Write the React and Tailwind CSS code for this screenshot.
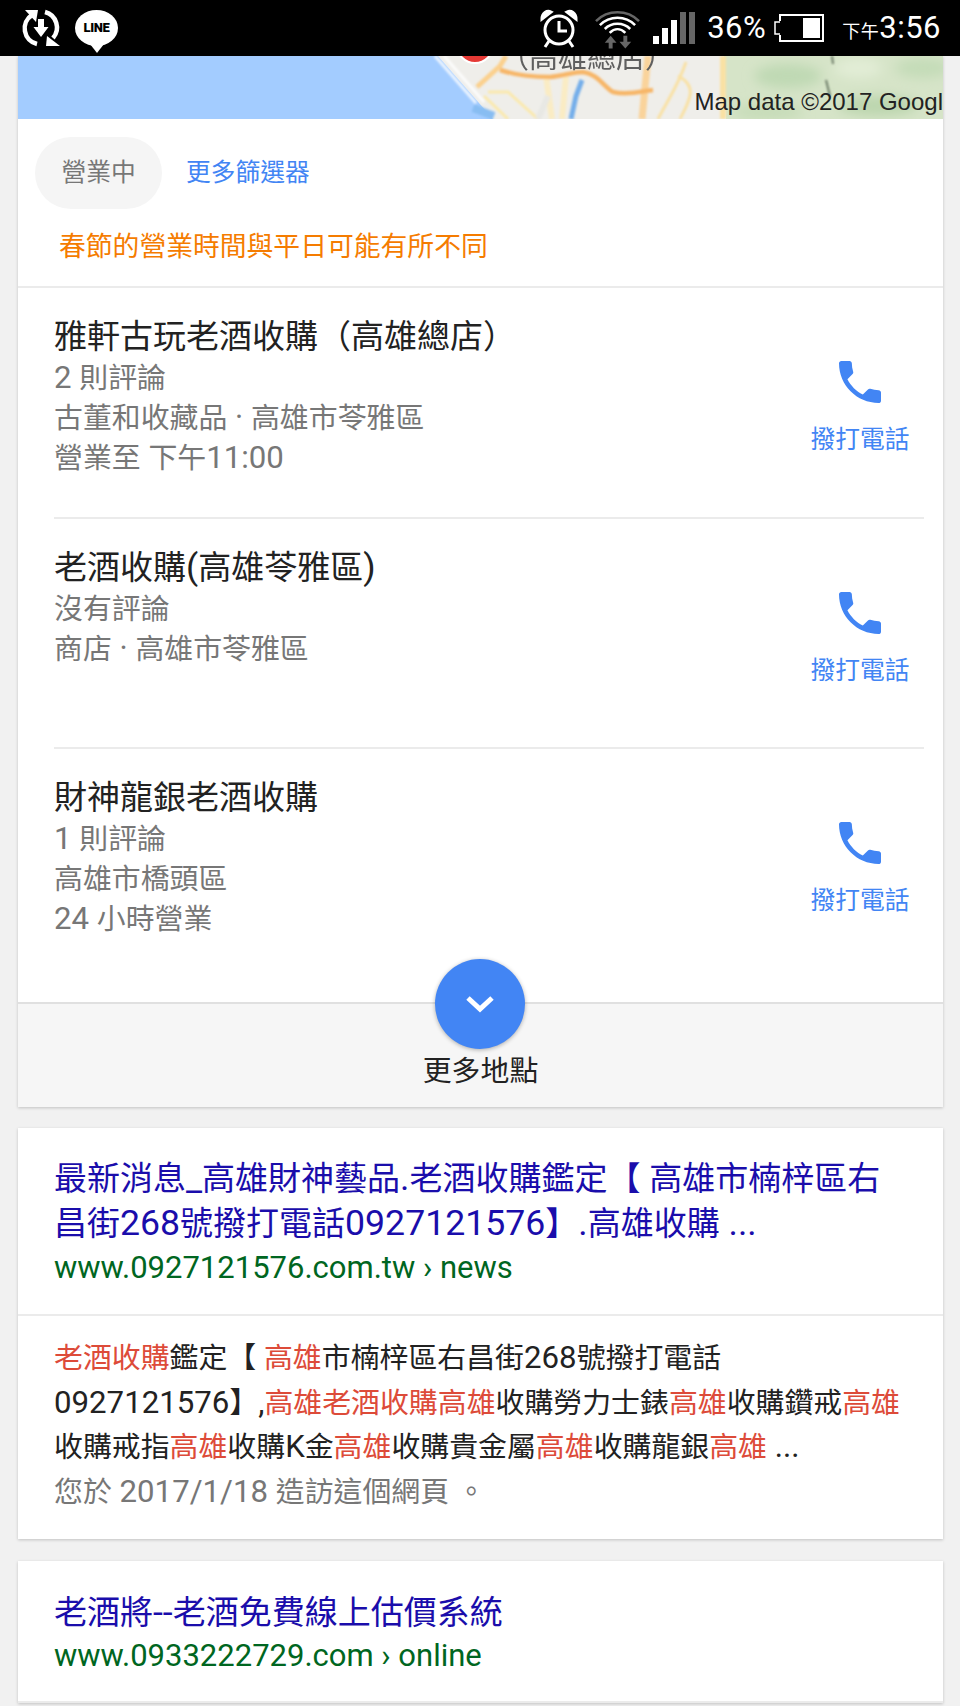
import React from 'react';

const font = "font-['Roboto','Noto_Sans_CJK_TC',sans-serif]";

const places = [
  { name: '雅軒古玩老酒收購（高雄總店）', lines: ['2 則評論', '古董和收藏品 · 高雄市苓雅區', '營業至 下午11:00'] },
  { name: '老酒收購(高雄苓雅區)', lines: ['沒有評論', '商店 · 高雄市苓雅區'] },
  { name: '財神龍銀老酒收購', lines: ['1 則評論', '高雄市橋頭區', '24 小時營業'] },
];

// latin runs sit a bit larger than the CJK around them in the screenshot
const Mix = ({ text }) =>
  text.split(/([\u0000-\u00ff]+)/).map((part, i) =>
    /^[\u0000-\u00ff]+$/.test(part) ? (
      <span key={i} className="text-[1.08em]">{part}</span>
    ) : (
      part
    ),
  );

const PhoneIcon = () => (
  <svg width="56" height="56" viewBox="0 0 24 24" fill="#4285f4">
    <path d="M6.62 10.79c1.44 2.83 3.76 5.14 6.59 6.59l2.2-2.2c.27-.27.67-.36 1.02-.24 1.12.37 2.33.57 3.57.57.55 0 1 .45 1 1V20c0 .55-.45 1-1 1-9.39 0-17-7.61-17-17 0-.55.45-1 1-1h3.5c.55 0 1 .45 1 1 0 1.25.2 2.45.57 3.57.11.35.03.74-.25 1.02l-2.2 2.2z" />
  </svg>
);

const SyncIcon = () => (
  <svg width="42" height="42" viewBox="0 0 42 42" fill="none" stroke="#fff" strokeWidth="4.5">
    <path d="M12 8 A16 16 0 0 0 17 37" />
    <path d="M25 5 A16 16 0 0 1 33 31" />
    <path d="M5 3 L18 3 L16 15 Z" fill="#fff" stroke="none" />
    <path d="M27 29 L40 39 L26 39 Z" fill="#fff" stroke="none" />
    <path d="M18 12 h6 v8 h4.5 l-7.500 10 l-7.500 -10 h4.500 z" fill="#fff" stroke="none" />
  </svg>
);

const LineIcon = () => (
  <div className="relative flex h-[36px] w-[43px] items-center justify-center rounded-[50%] bg-white">
    <span className="text-[13px] font-black tracking-tight text-black font-['Roboto',sans-serif]">LINE</span>
    <div className="absolute -bottom-[7px] left-[15px] h-0 w-0 border-x-[7px] border-t-[9px] border-x-transparent border-t-white" />
  </div>
);

const AlarmIcon = () => (
  <svg width="38" height="40" viewBox="0 0 38 40" fill="none" stroke="#fff" strokeWidth="3">
    <circle cx="19" cy="22" r="14" />
    <path d="M19 13 V23 H27" />
    <path d="M2 11 C2 5 7 2 11 4 Z" fill="#fff" />
    <path d="M36 11 C36 5 31 2 27 4 Z" fill="#fff" />
    <path d="M9 33 L5 39 M29 33 L33 39" />
  </svg>
);

const WifiIcon = () => (
  <svg width="45" height="44" viewBox="0 0 46 44" fill="none" strokeWidth="2.6">
    <path d="M1 15 C13 3 33 3 45 15" stroke="#666" />
    <path d="M5 19 C15 9 31 9 41 19" stroke="#fff" />
    <path d="M10 23 C17 16 29 16 36 23" stroke="#fff" />
    <path d="M15 27 C20 22 26 22 31 27" stroke="#fff" />
    <path d="M16 30 l6 7 h-4 v6 h-4 v-6 h-4 z" fill="#666" stroke="none" />
    <path d="M31 43 l6 -7 h-4 v-6 h-4 v6 h-4 z" fill="#666" stroke="none" />
  </svg>
);

const SignalIcon = () => (
  <div className="flex h-[32px] w-[42px] items-end gap-[3px]">
    <div className="h-[8px] w-[6px] bg-white" />
    <div className="h-[16px] w-[6px] bg-white" />
    <div className="h-[24px] w-[6px] bg-white" />
    <div className="h-[32px] w-[6px] bg-[#666]" />
    <div className="h-[32px] w-[6px] bg-[#666]" />
  </div>
);

const BatteryIcon = () => (
  <svg width="50" height="28" viewBox="0 0 50 28" fill="none">
    <path d="M6 8 H1 V20 H6" stroke="#fff" strokeWidth="1.500" />
    <path d="M6 7 V1 H49 V27 H6 V21" stroke="#fff" strokeWidth="2" />
    <rect x="29" y="4" width="17" height="20" fill="#fff" />
  </svg>
);

// static picture of the map strip
const MapStrip = () => (
  <svg className="block h-[63px] w-full" viewBox="0 0 925 63" preserveAspectRatio="none">
    <defs>
      <filter id="soft"><feGaussianBlur stdDeviation="0.9" /></filter>
      <filter id="softer"><feGaussianBlur stdDeviation="6" /></filter>
      <filter id="label"><feGaussianBlur stdDeviation="0.5" /></filter>
    </defs>
    <rect width="925" height="63" fill="#a3ccff" />
    <path d="M420 0 L475 63 H925 V0 Z" fill="#efeeea" />
    <path d="M706 0 H925 V63 H708 Z" fill="#d6e4c8" />
    <g filter="url(#softer)">
      <ellipse cx="770" cy="20" rx="34" ry="12" fill="#bfd9b4" />
      <ellipse cx="860" cy="50" rx="40" ry="10" fill="#bcd6ae" />
      <ellipse cx="905" cy="12" rx="28" ry="10" fill="#c4dcb8" />
      <ellipse cx="840" cy="12" rx="24" ry="10" fill="#e2edd6" />
      <ellipse cx="750" cy="56" rx="36" ry="8" fill="#c6dcb8" />
    </g>
    <g filter="url(#soft)" fill="none">
      <path d="M417 0 L458 47 M426 0 L466 46" stroke="#fff" strokeWidth="3" opacity="0.8" />
      <path d="M459 31 L482 10 L488 0" stroke="#fbd08d" strokeWidth="5" />
      <path d="M470 36 L490 36 L520 63 M490 63 L466 40" stroke="#fbe9ac" strokeWidth="3" />
      <path d="M528 20 L534 63 M548 20 L544 63" stroke="#faecc4" strokeWidth="6" />
      <path d="M630 0 L624 63" stroke="#fbcf8d" strokeWidth="7" opacity="0.85" />
      <path d="M705 0 V63" stroke="#f9e1a4" strokeWidth="6" />
      <path d="M640 63 C652 40 660 30 668 6 M662 63 C672 44 680 30 660 20" stroke="#f9e1a4" strokeWidth="3" />
      <path d="M482 14 C500 20 520 21 532 21 C545 20 555 16 565 16 C580 18 585 30 595 36 C610 40 625 35 635 34" stroke="#f7b668" strokeWidth="4.500" />
      <path d="M564 24 L558 40 L553 63" stroke="#74aeea" strokeWidth="5" />
      <path d="M455 52 L476 60" stroke="#88bdf2" strokeWidth="8" />
      <path d="M814 0 L815 8 M808 24 L812 40" stroke="#6b7a66" strokeWidth="2" />
      <path d="M520 63 L530 40" stroke="#e8e8e4" strokeWidth="6" />
    </g>
    <circle cx="457" cy="-11" r="18" fill="#e53935" stroke="#fff" strokeWidth="2" />
    <text x="482" y="12" fontSize="29" fill="#5f5f5f" fontFamily="'Noto Sans CJK TC',sans-serif" filter="url(#label)">（高雄總店）</text>
  </svg>
);

const Snippet = () => {
  const r = 'text-[#dd4b39]';
  return (
    <div className="px-[36px] pt-[20px] pb-[25px] text-[28.9px] leading-[44.5px] text-[#222]">
      <p className="whitespace-nowrap"><span className={r}>老酒收購</span>鑑定【<Mix text=" " /><span className={r}>高雄</span>市楠梓區右昌街<Mix text="268" />號撥打電話</p>
      <p className="whitespace-nowrap"><Mix text="0927121576" />】<Mix text="," /><span className={r}>高雄老酒收購高雄</span>收購勞力士錶<span className={r}>高雄</span>收購鑽戒<span className={r}>高雄</span></p>
      <p className="whitespace-nowrap">收購戒指<span className={r}>高雄</span>收購<Mix text="K" />金<span className={r}>高雄</span>收購貴金屬<span className={r}>高雄</span>收購龍銀<span className={r}>高雄</span><Mix text=" ..." /></p>
      <p className="whitespace-nowrap text-[#777]"><Mix text="您於 2017/1/18 造訪這個網頁 。" /></p>
    </div>
  );
};

const App = () => {
  return (
    <div className={`h-[1706px] w-[960px] overflow-hidden bg-[#f1f1f1] ${font}`}>
      {/* status bar */}
      <div className="flex h-[56px] items-center justify-between bg-black pl-[20px] pr-[19px]">
        <div className="flex items-center gap-[13px]">
          <SyncIcon />
          <LineIcon />
        </div>
        <div className="flex items-center text-white">
          <AlarmIcon />
          <div className="ml-[17px]"><WifiIcon /></div>
          <div className="ml-[13px]"><SignalIcon /></div>
          <span className="ml-[12px] text-[31px] tracking-[0.5px]">36%</span>
          <div className="ml-[8px]"><BatteryIcon /></div>
          <span className="ml-[18px] flex items-baseline text-[31px] tracking-[0.5px]"><span className="text-[18px]">下午</span>3:56</span>
        </div>
      </div>

      {/* local results card */}
      <div className="mx-[18px] w-[925px] bg-white shadow-[0_1px_3px_rgba(0,0,0,0.2)]">
        <div className="relative">
          <MapStrip />
          <span className="absolute bottom-[3px] right-0 whitespace-nowrap text-[24px] leading-[28px] text-[#222] font-['Liberation_Sans',sans-serif]">Map data ©2017 Googl</span>
        </div>
        <div className="flex items-center pl-[17px] pt-[18px]">
          <div className="flex h-[72px] w-[127px] items-center justify-center rounded-full bg-[#f5f5f5] text-[24.750px] text-[#777]">營業中</div>
          <span className="ml-[24px] text-[24.750px] text-[#4285f4]">更多篩選器</span>
        </div>
        <div className="flex h-[79px] items-center border-b-2 border-[#ebebeb] pl-[41px] text-[26.800px] text-[#f57c00]">
          春節的營業時間與平日可能有所不同
        </div>
        {places.map((place, i) => (
          <div key={place.name} className="ml-[36px] mr-[19px]">
            <div className={`flex justify-between pr-[14px] ${i === 0 ? 'h-[231px]' : ''} ${i === 1 ? 'h-[230px]' : ''} ${i < 2 ? 'border-b-2 border-[#ebebeb]' : 'h-[253px]'}`}>
              <div className="pt-[27px]">
                <div className="text-[33px] leading-[43px] text-[#222]"><Mix text={place.name} /></div>
                {place.lines.map((line) => (
                  <div key={line} className="text-[28.9px] leading-[40px] text-[#777]"><Mix text={line} /></div>
                ))}
              </div>
              <div className="flex w-[100px] flex-col items-center pt-[66px]">
                <PhoneIcon />
                <span className="mt-[14px] text-[24.750px] leading-[32px] text-[#4285f4]">撥打電話</span>
              </div>
            </div>
          </div>
        ))}
        <div className="relative h-[105px] border-t-2 border-[#e0e0e0] bg-[#f6f6f6] pt-[47px] text-center text-[28.9px] leading-[40px] text-[#222]">
          <div className="absolute -top-[45px] left-[417px] flex h-[90px] w-[90px] items-center justify-center rounded-full bg-[#4285f4] shadow-[0_1px_4px_rgba(0,0,0,0.3)]">
            <svg width="28" height="20" viewBox="0 0 28 20" fill="none" stroke="#fff" strokeWidth="5">
              <path d="M2 4 L14 15 L26 4" />
            </svg>
          </div>
          更多地點
        </div>
      </div>

      {/* organic result */}
      <div className="mx-[18px] mt-[21px] w-[925px] bg-white shadow-[0_1px_3px_rgba(0,0,0,0.2)]">
        <div className="h-[188px] border-b-2 border-[#ebebeb] px-[36px] pt-[28px]">
          <div className="whitespace-nowrap text-[33px] leading-[45px] text-[#1a0dab]">
            <Mix text="最新消息_高雄財神藝品.老酒收購鑑定【 高雄市楠梓區右" /><br />
            <Mix text="昌街268號撥打電話0927121576】.高雄收購 ..." />
          </div>
          <div className="text-[31px] leading-[44px] text-[#006621]">www.0927121576.com.tw › news</div>
        </div>
        <Snippet />
      </div>

      {/* next result, cut off by the fold */}
      <div className="mx-[18px] mt-[22px] w-[925px] bg-white shadow-[0_1px_3px_rgba(0,0,0,0.2)]">
        <div className="h-[142px] border-b-2 border-[#ebebeb] px-[36px] pt-[29px]">
          <div className="text-[33px] leading-[45px] text-[#1a0dab]"><Mix text="老酒將--老酒免費線上估價系統" /></div>
          <div className="text-[31px] leading-[42px] text-[#006621]">www.0933222729.com › online</div>
        </div>
      </div>
    </div>
  );
};

export default App;
